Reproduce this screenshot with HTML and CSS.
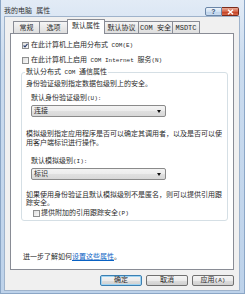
FILE: index.html
```html
<!DOCTYPE html>
<html lang="zh-CN">
<head>
<meta charset="utf-8">
<title>我的电脑 属性</title>
<link rel="stylesheet" href="styles.css">
</head>
<body>
<div class="window">
  <div class="titlebar">
    <span class="title">我的电脑 属性</span>
    <div class="caps">
      <span class="cap help">?</span>
      <span class="cap close"><svg width="7" height="6" viewBox="0 0 7 6"><path d="M1 0.8 L6 5.2 M6 0.8 L1 5.2" stroke="#fff" stroke-width="1.4"/></svg></span>
    </div>
  </div>
  <div class="client">
    <div class="tabs">
      <span class="tab w27">常规</span>
      <span class="tab w29">选项</span>
      <span class="tab sel w38">默认属性</span>
      <span class="tab w35">默认协议</span>
      <span class="tab w35">COM 安全</span>
      <span class="tab w28">MSDTC</span>
    </div>
    <div class="page">
      <div class="check-row first">
        <span class="box"><svg width="5" height="5" viewBox="0 0 5 5"><path d="M0.6 2.5 L2 3.9 L4.5 0.8" fill="none" stroke="#2b3f6e" stroke-width="1.1"/></svg></span>
        <span>在此计算机上启用分布式<span class="en"> COM(E)</span></span>
      </div>
      <div class="check-row second">
        <span class="box"></span>
        <span>在此计算机上启用<span class="en"> COM Internet </span>服务<span class="en">(N)</span></span>
      </div>
      <fieldset class="group">
        <legend>默认分布式<span class="en"> COM </span>通信属性</legend>
        <p class="p1">身份验证级别指定数据包级别上的安全。</p>
        <div class="label l1">默认身份验证级别<span class="en">(U):</span></div>
        <div class="combo"><span>连接</span><span class="arrow"></span></div>
        <p class="p2">模拟级别指定应用程序是否可以确定其调用者，以及是否可以使用客户端标识进行操作。</p>
        <div class="label l2">默认模拟级别<span class="en">(I):</span></div>
        <div class="combo"><span>标识</span><span class="arrow"></span></div>
        <p class="p3">如果使用身份验证且默认模拟级别不是匿名，则可以提供引用跟踪安全。</p>
        <div class="check-row third">
          <span class="box"></span>
          <span>提供附加的引用跟踪安全<span class="en">(P)</span></span>
        </div>
      </fieldset>
      <div class="more">进一步了解如何<a class="link" href="#">设置这些属性</a>。</div>
    </div>
    <div class="buttons">
      <span class="btn default">确定</span>
      <span class="btn">取消</span>
      <span class="btn">应用<span class="en">(A)</span></span>
    </div>
  </div>
</div>
</body>
</html>
```
FILE: styles.css
```css
* { box-sizing: border-box; }
html, body { margin: 0; padding: 0; background: #fff; }
body {
  font-family: "Liberation Mono", "Noto Sans CJK SC", monospace;
  font-size: 7px;
  color: #2a2a2a;
}
.en { font-size: 6px; }
.window {
  width: 245px;
  height: 294px;
  background: linear-gradient(#e2ebf6, #cbdcef 60px, #bdd2ea);
  border: 1px solid #8ba6c6;
  border-top: none;
  padding: 0 4px 2px 3px;
  display: flex;
  flex-direction: column;
}
.titlebar {
  height: 16px;
  display: flex;
  justify-content: space-between;
  align-items: flex-start;
}
.title {
  margin-top: 6px;
  line-height: 10px;
  color: #333;
}
.caps {
  display: flex;
  margin-top: 7px;
  margin-right: 1px;
}
.cap {
  width: 17px;
  height: 9px;
  display: flex;
  align-items: center;
  justify-content: center;
  border: 1px solid #6b86a8;
  line-height: 7px;
}
.help {
  background: linear-gradient(#eef4fb, #d3e2f2 50%, #bdd2ea 51%, #c9dcf0);
  color: #3b5375;
  font-family: "Liberation Sans", sans-serif;
  font-weight: bold;
  font-size: 7px;
  border-radius: 2px 0 0 2px;
}
.close {
  background: linear-gradient(#eaa995, #d4664b 50%, #c2391d 51%, #d86a4c);
  border-color: #7a2a1a;
  border-left: none;
  border-radius: 0 2px 2px 0;
}
.client {
  flex: 1;
  background: #f0f0f0;
  border: 1px solid #9fb3cb;
  padding: 2px 5px 4px 5px;
  display: flex;
  flex-direction: column;
}
.tabs {
  height: 15px;
  margin-bottom: -1px;
  padding-left: 3px;
  display: flex;
  align-items: flex-end;
  position: relative;
  z-index: 1;
}
.tab {
  height: 12px;
  margin-bottom: 1px;
  margin-right: -1px;
  border: 1px solid #898c95;
  border-bottom: none;
  background: linear-gradient(#f5f5f5, #e9e9e9 50%, #dedede);
  display: flex;
  align-items: center;
  justify-content: center;
  line-height: 10px;
  border-radius: 1px 1px 0 0;
}
.tab.sel {
  height: 15px;
  margin-bottom: 0;
  background: #fff;
  position: relative;
  z-index: 2;
  padding-bottom: 2px;
}
.w27 { width: 27px; }
.w28 { width: 28px; }
.w29 { width: 29px; }
.w35 { width: 35px; }
.w38 { width: 38px; }
.page {
  height: 237px;
  background: #fff;
  border: 1px solid #898c95;
  padding-top: 6px;
  display: flex;
  flex-direction: column;
}
.check-row {
  height: 10px;
  display: flex;
  align-items: center;
  gap: 2px;
  line-height: 10px;
  margin-left: 11px;
}
.check-row.second { margin-top: 5px; }
.box {
  width: 7px;
  height: 7px;
  border: 1px solid #8e8f8f;
  background: linear-gradient(135deg, #dedede, #fafafa);
  display: flex;
  align-items: center;
  justify-content: center;
}
.group {
  margin: 2px 5px 0 10px;
  padding: 0 3px 2px 4px;
  border: 1px solid #d5dfe5;
  border-radius: 3px;
  min-width: 0;
}
.group legend {
  padding: 0 1px;
  margin-left: -1px;
  line-height: 10px;
}
.group p { margin: 0; }
.p1 { margin-top: 1px !important; line-height: 10px; }
.label { line-height: 10px; margin-left: 5px; }
.l1 { margin-top: 4px; }
.l2 { margin-top: 8px; }
.combo {
  margin-top: 1px;
  margin-left: 5px;
  width: 135px;
  height: 12px;
  border: 1px solid #8a8a8a;
  border-radius: 2px;
  background: linear-gradient(#f3f3f3, #ececec 50%, #e0e0e0 51%, #d8d8d8);
  display: flex;
  align-items: center;
  justify-content: space-between;
  padding: 0 4px 0 2px;
  line-height: 10px;
}
.arrow {
  width: 0;
  height: 0;
  border-left: 2.5px solid transparent;
  border-right: 2.5px solid transparent;
  border-top: 3px solid #111;
}
.p2 { margin-top: 13px !important; line-height: 9px; }
.p3 { margin-top: 11px !important; line-height: 8px; }
.check-row.third { margin-top: 1px; margin-left: 7px; gap: 1px; }
.more {
  margin-top: 31px;
  margin-left: 12px;
  line-height: 10px;
}
.link { color: #0a62c4; text-decoration: underline; }
.buttons {
  margin-top: 5px;
  display: flex;
  justify-content: flex-end;
  gap: 4px;
}
.btn {
  width: 42px;
  height: 11px;
  border: 1px solid #707070;
  border-radius: 2px;
  background: linear-gradient(#f4f4f4, #ebebeb 50%, #dddddd 51%, #d0d0d0);
  display: flex;
  align-items: center;
  justify-content: center;
  line-height: 9px;
}
.btn.default {
  border-color: #3c7fb1;
  box-shadow: inset 0 0 0 1px #9fd4f3;
}
```
